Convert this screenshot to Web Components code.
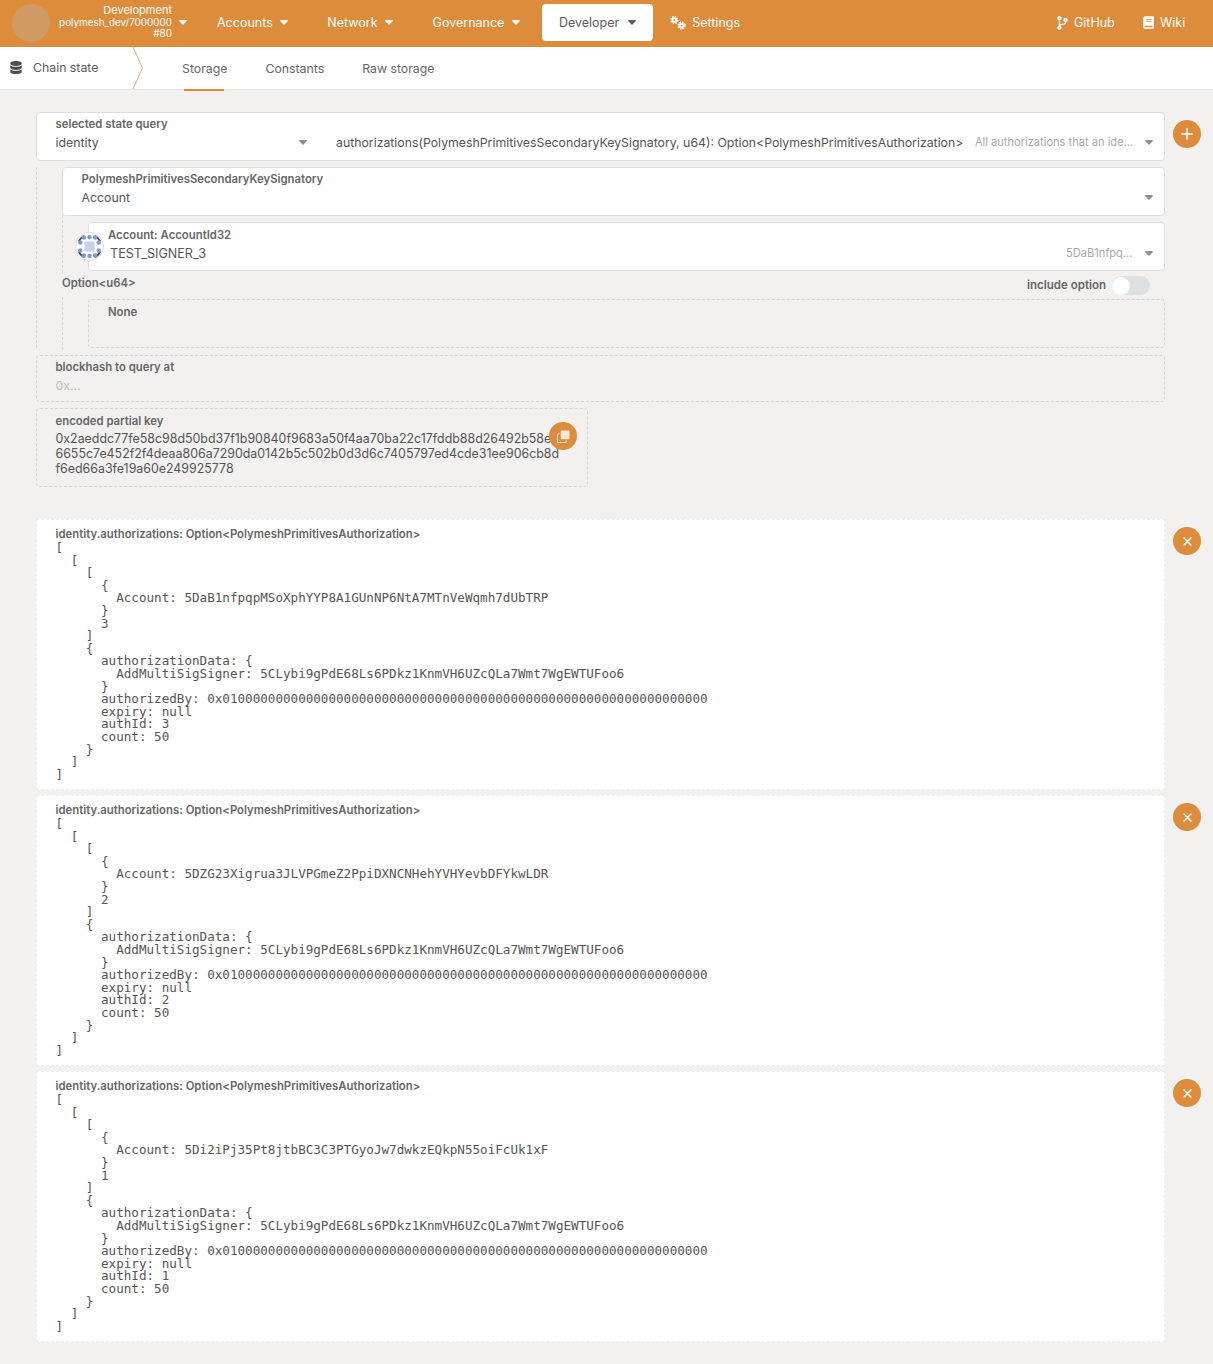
<!DOCTYPE html>
<html lang="en"><head><meta charset="utf-8"><title>Chain state</title>
<style>
html,body{margin:0;padding:0;background:#f2f1f0}
body{font-family:Inter,"Liberation Sans",sans-serif;font-size:12.3px;color:#555}
</style></head><body>
<pa-app>
  <pa-header slot="header">
    <pa-chain></pa-chain>
    <pa-navitem caret w="54">Accounts</pa-navitem>
    <pa-navitem caret w="49">Network</pa-navitem>
    <pa-navitem caret w="70">Governance</pa-navitem>
    <pa-navitem caret active w="60">Developer</pa-navitem>
    <pa-navitem icon="cogs" tight w="49">Settings</pa-navitem>
    <pa-spacer></pa-spacer>
    <pa-navitem icon="branch" tight w="40">GitHub</pa-navitem>
    <pa-navitem icon="book" tight w="25">Wiki</pa-navitem>
  </pa-header>
  <pa-tabs slot="tabs"></pa-tabs>

  <pa-row button="plus">
    <pa-field label="selected state query" solid>
      <pa-split>
        <span slot="a">identity</span>
        <span slot="b">authorizations(PolymeshPrimitivesSecondaryKeySignatory, u64): Option&lt;PolymeshPrimitivesAuthorization&gt;</span>
        <span slot="c">All authorizations that an ide...</span>
      </pa-split>
    </pa-field>
  </pa-row>

  <pa-row>
    <pa-nest>
      <pa-field label="PolymeshPrimitivesSecondaryKeySignatory" solid caret>Account</pa-field>
      <pa-nest plain>
        <pa-field label="Account: AccountId32" solid caret note="5DaB1nfpq..." tight><pa-identicon slot="over"></pa-identicon><span style="font-size:12.6px">TEST_SIGNER_3</span></pa-field>
      </pa-nest>
      <pa-option></pa-option>
      <pa-nest dashed>
        <pa-field label="None" tall></pa-field>
      </pa-nest>
    </pa-nest>
  </pa-row>

  <pa-row>
    <pa-field label="blockhash to query at" muted>0x...</pa-field>
  </pa-row>

  <pa-row narrow>
    <pa-field label="encoded partial key" code>0x2aeddc77fe58c98d50bd37f1b90840f9683a50f4aa70ba22c17fddb88d26492b58e<br>6655c7e452f2f4deaa806a7290da0142b5c502b0d3d6c7405797ed4cde31ee906cb8d<br>f6ed66a3fe19a60e249925778<pa-roundbtn slot="over" icon="copy"></pa-roundbtn></pa-field>
  </pa-row>

  <pa-results>
    <pa-row button="times"><pa-result account="5DaB1nfpqpMSoXphYYP8A1GUnNP6NtA7MTnVeWqmh7dUbTRP" n="3"></pa-result></pa-row>
    <pa-row button="times"><pa-result account="5DZG23Xigrua3JLVPGmeZ2PpiDXNCNHehYVHYevbDFYkwLDR" n="2"></pa-result></pa-row>
    <pa-row button="times"><pa-result account="5Di2iPj35Pt8jtbBC3C3PTGyoJw7dwkzEQkpN55oiFcUk1xF" n="1"></pa-result></pa-row>
  </pa-results>
</pa-app>

<script>
const ICONS = {
  caret:'<svg viewBox="0 0 10 6" width="8" height="5"><path d="M1 0h8c.8 0 1.2 1 .6 1.5L5.6 5.6c-.3.4-.9.4-1.2 0L.4 1.5C-.2 1 .2 0 1 0z" fill="currentColor"/></svg>',
  branch:'<svg viewBox="0 0 384 512" width="11" height="14"><path fill="currentColor" d="M384 144c0-44.2-35.8-80-80-80s-80 35.8-80 80c0 36.4 24.3 67.1 57.5 76.8-.6 16.1-4.2 28.5-11 36.9-15.4 19.2-49.3 22.4-85.2 25.7-28.2 2.6-57.4 5.4-81.3 16.9v-144c32.5-10.2 56-40.5 56-76.3 0-44.2-35.8-80-80-80S0 35.8 0 80c0 35.8 23.5 66.1 56 76.3v199.3C23.5 365.9 0 396.2 0 432c0 44.2 35.8 80 80 80s80-35.8 80-80c0-34-21.2-63.1-51.2-74.6 3.1-5.2 7.8-9.8 14.9-13.4 16.2-8.2 40.4-10.4 66.1-12.8 42.2-3.9 90-8.4 118.2-43.4 14-17.4 21.1-39.8 21.6-67.9 31.6-10.8 54.4-40.7 54.4-75.9zM80 64c8.8 0 16 7.2 16 16s-7.2 16-16 16-16-7.2-16-16 7.2-16 16-16zm0 384c-8.8 0-16-7.2-16-16s7.2-16 16-16 16 7.2 16 16-7.2 16-16 16zm224-320c8.8 0 16 7.2 16 16s-7.2 16-16 16-16-7.2-16-16 7.2-16 16-16z"/></svg>',
  book:'<svg viewBox="0 0 448 512" width="11" height="13"><path fill="currentColor" d="M448 360V24c0-13.3-10.7-24-24-24H96C43 0 0 43 0 96v320c0 53 43 96 96 96h328c13.3 0 24-10.7 24-24v-16c0-7.5-3.5-14.3-8.9-18.7-4.2-15.4-4.2-59.3 0-74.7 5.4-4.3 8.9-11.1 8.9-18.6zM128 134c0-3.3 2.7-6 6-6h212c3.3 0 6 2.7 6 6v20c0 3.3-2.7 6-6 6H134c-3.3 0-6-2.7-6-6v-20zm0 64c0-3.3 2.7-6 6-6h212c3.3 0 6 2.7 6 6v20c0 3.3-2.7 6-6 6H134c-3.3 0-6-2.7-6-6v-20zm253.4 250H96c-17.7 0-32-14.3-32-32 0-17.6 14.4-32 32-32h285.4c-1.9 17.1-1.9 46.9 0 64z"/></svg>',
  cogs:'<svg viewBox="0 0 16 14" width="16" height="14"><g fill="none" stroke="currentColor"><circle cx="4.3" cy="4" r="1.9" stroke-width="1.9"/><circle cx="4.3" cy="4" r="3.5" stroke-width="1.3" stroke-dasharray="1.6 1.15"/><circle cx="11.6" cy="9.6" r="1.9" stroke-width="1.9"/><circle cx="11.6" cy="9.6" r="3.5" stroke-width="1.3" stroke-dasharray="1.6 1.15"/></g></svg>',
  db:'<svg viewBox="0 0 448 512" width="12" height="13"><path fill="currentColor" d="M448 73.143v45.714C448 159.143 347.667 192 224 192S0 159.143 0 118.857V73.143C0 32.857 100.333 0 224 0s224 32.857 224 73.143zM448 176v102.857C448 319.143 347.667 352 224 352S0 319.143 0 278.857V176c48.125 33.143 136.208 48.572 224 48.572S399.874 209.143 448 176zm0 160v102.857C448 479.143 347.667 512 224 512S0 479.143 0 438.857V336c48.125 33.143 136.208 48.572 224 48.572S399.874 369.143 448 336z"/></svg>',
  plus:'<svg viewBox="0 0 12 12" width="12" height="12"><path d="M6 .8v10.4M.8 6h10.4" stroke="currentColor" stroke-width="1.5" stroke-linecap="round"/></svg>',
  times:'<svg viewBox="0 0 10 10" width="9" height="9"><path d="M1.2 1.2l7.6 7.6M8.8 1.2L1.2 8.8" stroke="currentColor" stroke-width="1.7" stroke-linecap="round"/></svg>',
  copy:'<svg viewBox="0 0 14 14" width="13" height="13"><rect x="4" y="0.5" width="9.5" height="9.5" rx="1.5" fill="currentColor"/><path d="M2.6 4H2a1.5 1.5 0 0 0-1.5 1.5V12A1.5 1.5 0 0 0 2 13.5h6.5A1.5 1.5 0 0 0 10 12v-.6" fill="none" stroke="currentColor" stroke-width="1.2"/></svg>'
};
function def(name, css, html){
  customElements.define(name, class extends HTMLElement{
    constructor(){super();this.attachShadow({mode:'open'});}
    connectedCallback(){
      const h = typeof html==='function'?html(this):html;
      this.shadowRoot.innerHTML='<style>'+css+'</style>'+h;
    }
  });
}
def('pa-app',`:host{display:block;min-height:1364px;box-sizing:border-box;padding-bottom:22px}
 main{display:flex;flex-direction:column;gap:7px;padding:22px 12px 0 36px}`,
 `<slot name="header"></slot><slot name="tabs"></slot><main><slot></slot></main>`);
def('pa-header',`:host{display:flex;align-items:center;height:47px;background:#dd8c3c;color:#fff;padding:0 16px 2px 0;box-sizing:border-box}`,`<slot></slot>`);
def('pa-spacer',`:host{display:block;flex:1}`,``);
def('pa-chain',`:host{display:flex;align-items:center;width:200px;flex:none;box-sizing:border-box;padding-left:12px;color:#fff}
 .logo{width:38px;height:38px;border-radius:50%;background:#cf9a63;flex:none}
 .t{width:122px;text-align:right;font-size:9.9px;line-height:11.5px;white-space:nowrap}
 .t .d{font-size:11px}.t .n{font-size:10px}
 .c{margin-left:7px;display:flex}`,
 ()=>`<div class="logo"></div><div class="t"><div class="d">Development</div><div>polymesh_dev/7000000</div><div class="n">#80</div></div><div class="c">${ICONS.caret}</div>`);
def('pa-navitem',`:host{display:flex;align-items:center;height:37px;padding:0 17px;margin-right:5.3px;border-radius:4px;box-sizing:border-box;white-space:nowrap;font-size:12.5px;gap:9px;flex:none}
 :host([active]){background:#fff;color:#5c5c5c}
 :host([tight]){padding:0 12px;margin:0 0 0 5px;gap:6px}
 :host([icon="cogs"]){margin-left:0}
 .c,.i{display:flex}.x{display:inline-block}`,
 el=>`${el.getAttribute('icon')?`<span class="i">${ICONS[el.getAttribute('icon')]}</span>`:''}<span class="x" style="width:${el.getAttribute('w')}px"><slot></slot></span>${el.hasAttribute('caret')?`<span class="c">${ICONS.caret}</span>`:''}`);
def('pa-tabs',`:host{display:flex;align-items:stretch;height:42px;background:#fff;border-bottom:1px solid #e8e6e4;color:#666;font-size:12.3px}
 .head{display:flex;align-items:center;gap:11px;width:132px;padding-left:10px;box-sizing:border-box;flex:none;padding-bottom:2px;color:#5c5c5c}
 .head svg{display:block;color:#4e4e4e}
 .chev{flex:none;width:12px;height:42px;display:block}
 .tabs{display:flex;margin-left:38px;gap:38px}
 .tab{position:relative;display:flex;align-items:center}
 .tab.on::after{content:"";position:absolute;left:2px;right:3px;bottom:-2px;height:2px;background:#dd8c3c}`,
 ()=>`<div class="head">${ICONS.db}<span>Chain state</span></div>
 <svg class="chev" viewBox="0 0 12 42"><path d="M1 0l9.5 21L1 42" fill="none" stroke="#e9a76a" stroke-width="1"/></svg>
 <div class="tabs"><div class="tab on">Storage</div><div class="tab">Constants</div><div class="tab">Raw storage</div></div>`);
def('pa-row',`:host{display:grid;grid-template-columns:1129px 28px;column-gap:8px;align-items:start}
 :host([narrow]){grid-template-columns:552px}
 .b{margin-top:8px}`,
 el=>`<slot></slot>${el.getAttribute('button')?`<pa-roundbtn class="b" icon="${el.getAttribute('button')}"></pa-roundbtn>`:''}`);
def('pa-roundbtn',`:host{display:flex;align-items:center;justify-content:center;width:28px;height:28px;border-radius:50%;background:#dd8c3c;color:#fff}
 :host([slot="over"]){position:absolute;right:10px;top:13px;color:#fbe9d8}`,el=>ICONS[el.getAttribute('icon')]);
def('pa-field',`:host{display:block;position:relative;box-sizing:border-box;border:1px dashed #d6d5d3;border-radius:4px;padding:4px 12px 0 18.5px;color:#555}
 :host([solid]){background:#fff;border:1px solid #dfdedc;height:49px;margin-bottom:-1px}
 :host([tight]){padding-left:19px;padding-top:5px}
 :host([tall]){height:49px;padding-left:19px;padding-top:5px}
 :host([muted]){height:47px;margin-bottom:-1px}
 :host([code]){height:79px;padding-top:5px}
 .l{font-size:11.35px;font-weight:600;line-height:14px;color:#666;white-space:nowrap}
 .v{font-size:12.3px;line-height:17px;margin-top:3px;white-space:nowrap;min-height:17px;display:flex;align-items:center}
 :host([tight]) .v{padding-left:2px}
 :host([muted]) .v{color:#bdbdbd}
 :host([code]) .v{display:block;line-height:15px;margin-top:2.5px;font-size:12.4px}
 :host([tall]) .v{display:none}
 .s{flex:1}
 .n{font-size:11.1px;color:#a8a8a8;margin-right:12px}
 .c{display:flex;color:#8f8f8f;margin-right:-.5px}`,
 el=>`<div class="l">${el.getAttribute('label')}</div><div class="v"><slot></slot>${el.hasAttribute('caret')?`<span class="s"></span>${el.getAttribute('note')?`<span class="n">${el.getAttribute('note')}</span>`:''}<span class="c">${ICONS.caret}</span>`:''}</div><slot name="over"></slot>`);
def('pa-split',`:host{display:flex;align-items:center;width:100%;white-space:nowrap}
 .a{width:251px;flex:none;display:flex;align-items:center;justify-content:space-between}
 .b{margin-left:29.5px;flex:none}
 .c{margin-left:11.5px;flex:1;font-size:11.1px;color:#a8a8a8}
 .k{display:flex;color:#8f8f8f;margin-right:-.5px}`,
 ()=>`<div class="a"><slot name="a"></slot><span class="k">${ICONS.caret}</span></div><div class="b"><slot name="b"></slot></div><div class="c"><slot name="c"></slot></div><span class="k">${ICONS.caret}</span>`);
def('pa-nest',`:host{display:flex;flex-direction:column;gap:7px;border-left:1px dashed #d6d5d3;padding-left:25px}
 :host([plain]){margin-top:-7px;padding-top:7px;margin-bottom:-3px;padding-bottom:3px}
 :host([dashed]){margin-top:-2px;padding-top:2px;padding-bottom:2px;margin-bottom:-2px}`,`<slot></slot>`);
def('pa-identicon',`:host{position:absolute;left:-14.5px;top:9px;width:29px;height:29px;display:block}`,
 ()=>{
  const c=14.5, dots=[[-5.6,-9],[0,-9.4],[5.6,-9],[-5.6,9],[0,9.4],[5.6,9],[-9.2,-4],[-9.2,4],[9.2,-4],[9.2,4]];
  return `<svg viewBox="0 0 29 29" width="29" height="29"><circle cx="${c}" cy="${c}" r="14" fill="#fff" stroke="#dcdcdc"/>
  <path d="M3.8 9.2A12 12 0 0 1 9.2 3.8M19.8 3.8A12 12 0 0 1 25.2 9.2M25.2 19.8A12 12 0 0 1 19.8 25.2M9.2 25.2A12 12 0 0 1 3.8 19.8" fill="none" stroke="#444" stroke-width="1.9"/>
  ${dots.map(p=>`<circle cx="${c+p[0]}" cy="${c+p[1]}" r="2.2" fill="#7e97d4"/>`).join('')}
  <rect x="9.5" y="9.5" width="10" height="10" fill="#c3d0ee"/></svg>`;
 });
def('pa-option',`:host{display:flex;align-items:center;justify-content:space-between;height:19px;margin-top:-1px;margin-bottom:-3px;font-size:11.35px;font-weight:600;color:#666;padding-right:15px}
 .l{padding-bottom:6px}
 .r{display:flex;align-items:center;gap:6px;font-size:11.5px}
 .o{padding-bottom:2px}
 .t{width:38px;height:19px;border-radius:10px;background:#dfe0e2;position:relative}
 .t::after{content:"";position:absolute;left:0;top:.5px;width:18px;height:18px;border-radius:50%;background:#fff}`,
 `<span class="l">Option&lt;u64&gt;</span><span class="r"><span class="o">include option</span><span class="t"></span></span>`);
def('pa-results',`:host{display:flex;flex-direction:column;gap:5px;margin-top:25px}`,`<slot></slot>`);
def('pa-result',`:host{display:block;box-sizing:border-box;height:271px;background:#fff;border:1px dashed #ececea;padding:7px 0 0 18.5px;color:#4e4e4e}
 .l{font-size:11.35px;font-weight:600;line-height:14px;color:#666;white-space:nowrap}
 pre{margin:1px 0 0;font-family:"DejaVu Sans Mono",monospace;font-size:12.6px;line-height:12.6px;color:#555}`,
 el=>`<div class="l">identity.authorizations: Option&lt;PolymeshPrimitivesAuthorization&gt;</div><pre>[
  [
    [
      {
        Account: ${el.getAttribute('account')}
      }
      ${el.getAttribute('n')}
    ]
    {
      authorizationData: {
        AddMultiSigSigner: 5CLybi9gPdE68Ls6PDkz1KnmVH6UZcQLa7Wmt7WgEWTUFoo6
      }
      authorizedBy: 0x0100000000000000000000000000000000000000000000000000000000000000
      expiry: null
      authId: ${el.getAttribute('n')}
      count: 50
    }
  ]
]</pre>`);
</script>
</body></html>
